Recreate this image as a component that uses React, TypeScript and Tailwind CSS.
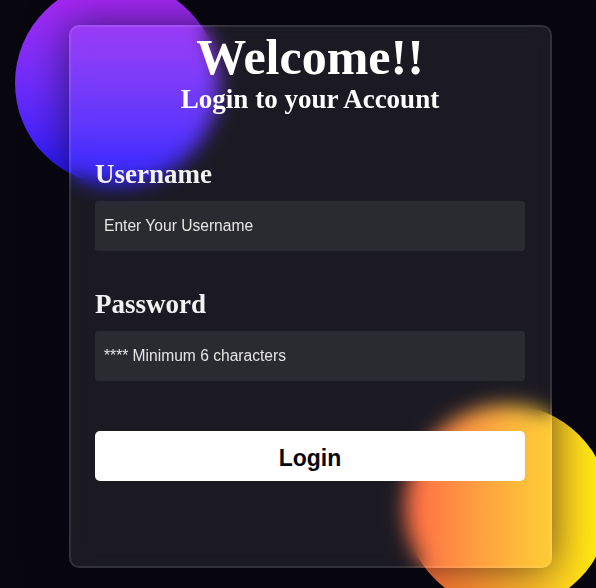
import { useState } from "react";

const serif = "font-['Liberation_Serif','Times_New_Roman',serif]";
const sans = "font-['Liberation_Sans',Arial,sans-serif]";

function Field({ label, placeholder, type = "text", value, onChange }: {
  label: string;
  placeholder: string;
  type?: string;
  value: string;
  onChange: (v: string) => void;
}) {
  return (
    <div className="flex flex-col">
      <label className={`${serif} text-[27px] leading-none font-bold text-[#f2f2f2]`}>{label}</label>
      <input
        type={type}
        value={value}
        onChange={(e) => onChange(e.target.value)}
        placeholder={placeholder}
        className={`${sans} mt-[13px] h-[50px] w-full rounded-[4px] bg-white/[0.07] px-[9px] text-[15.6px] text-white outline-none placeholder:text-[#e5e5e5]`}
      />
    </div>
  );
}

export default function App() {
  const [username, setUsername] = useState("");
  const [password, setPassword] = useState("");

  return (
    <div className="relative h-[588px] w-[596px] overflow-hidden bg-[#080710]">
      {/* background shapes */}
      <div className="absolute left-[15px] top-[-19px] h-[204px] w-[204px] rounded-full bg-gradient-to-b from-[#b122f2] to-[#1a0cff]" />
      <div className="absolute left-[405px] top-[405px] h-[204px] w-[204px] rounded-full bg-gradient-to-r from-[#ff5a36] to-[#fff200]" />

      <div className="relative pl-[69px] pt-[25px]">
        <form
          onSubmit={(e) => e.preventDefault()}
          className="flex h-[543px] w-[483px] flex-col rounded-[10px] border-2 border-white/10 bg-white/[0.08] pl-[24px] pr-[25px] pt-[5px] shadow-[0_0_40px_rgba(8,7,16,0.6)] backdrop-blur-[10px]"
        >
          <h1 className={`${serif} text-center text-[50px] leading-none font-bold text-white`}>Welcome!!</h1>
          <h2 className={`${serif} mt-[4px] text-center text-[27px] leading-none font-bold text-white`}>
            Login to your Account
          </h2>

          <div className="mt-[48px]">
            <Field label="Username" placeholder="Enter Your Username" value={username} onChange={setUsername} />
          </div>
          <div className="mt-[40px]">
            <Field label="Password" type="password" placeholder="**** Minimum 6 characters" value={password} onChange={setPassword} />
          </div>

          <button
            type="submit"
            className={`${sans} mt-[50px] h-[50px] w-full rounded-[5px] bg-white pt-[4px] text-[23px] font-bold text-[#080710]`}
          >
            Login
          </button>
        </form>
      </div>
    </div>
  );
}
